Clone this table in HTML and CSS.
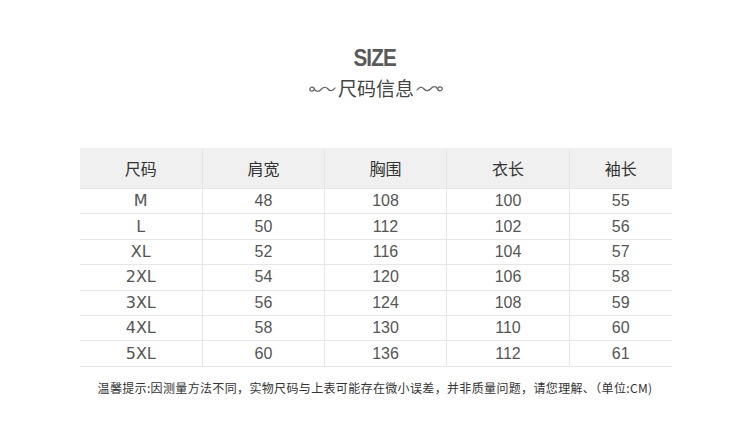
FILE: index.html
```html
<!DOCTYPE html>
<html lang="zh">
<head>
<meta charset="utf-8">
<link rel="stylesheet" href="styles.css">
</head>
<body>
<div class="page">
  <div class="title">SIZE</div>
  <div class="subtitle">
    <svg class="orn" width="28" height="12" viewBox="0 0 28 12"><path d="M6 7 C4 9 1 8 2 5.5 C3 3.5 6 4 6.5 6 C7.5 9 11 9 13 6.5 C15 4 18 3.5 20 6 C22 8.5 25 8 27 5" fill="none" stroke="#666" stroke-width="1.3" stroke-linecap="round"/></svg>
    <span>尺码信息</span>
    <svg class="orn" width="28" height="12" viewBox="0 0 28 12"><path d="M1 7 C3 4 6 3.5 8 6 C10 8.5 13 8 15 5.5 C17 3 20.5 3 21.5 6 C22 8 25 8.5 26 6.5 C27 4 24 3 22 5" fill="none" stroke="#666" stroke-width="1.3" stroke-linecap="round"/></svg>
  </div>
  <table class="sizes">
    <colgroup>
      <col class="c1"><col class="c2"><col class="c3"><col class="c4"><col class="c5">
    </colgroup>
    <thead>
      <tr><th>尺码</th><th>肩宽</th><th>胸围</th><th>衣长</th><th>袖长</th></tr>
    </thead>
    <tbody>
      <tr><td class="sz">M</td><td>48</td><td>108</td><td>100</td><td>55</td></tr>
      <tr><td class="sz">L</td><td>50</td><td>112</td><td>102</td><td>56</td></tr>
      <tr><td class="sz">XL</td><td>52</td><td>116</td><td>104</td><td>57</td></tr>
      <tr><td class="sz">2XL</td><td>54</td><td>120</td><td>106</td><td>58</td></tr>
      <tr><td class="sz">3XL</td><td>56</td><td>124</td><td>108</td><td>59</td></tr>
      <tr><td class="sz">4XL</td><td>58</td><td>130</td><td>110</td><td>60</td></tr>
      <tr><td class="sz">5XL</td><td>60</td><td>136</td><td>112</td><td>61</td></tr>
    </tbody>
  </table>
  <p class="note">温馨提示:因测量方法不同，实物尺码与上表可能存在微小误差，并非质量问题，请您理解、（单位:CM)</p>
</div>
</body>
</html>
```

FILE: styles.css
```css
html, body {
  margin: 0;
  padding: 0;
  background: #fff;
}
.page {
  width: 750px;
  height: 423px;
  display: flex;
  flex-direction: column;
  align-items: center;
  font-family: "Liberation Sans", "Noto Sans CJK SC", sans-serif;
  color: #555;
}
.title {
  margin-top: 44px;
  font-size: 24px;
  font-weight: bold;
  color: #595959;
  letter-spacing: -1px;
  line-height: 28px;
  transform: scaleX(0.86);
}
.subtitle {
  margin-top: 3px;
  display: flex;
  align-items: center;
  gap: 2px;
  font-family: "Noto Sans CJK SC", sans-serif;
  font-size: 19px;
  line-height: 26px;
  color: #444;
  margin-left: 2px;
}
.orn {
  display: block;
  margin-top: 2px;
}
.sizes {
  margin-top: 47px;
  margin-left: 1px;
  border-collapse: collapse;
  width: 592px;
  table-layout: fixed;
}
.c1 { width: 123px; }
.c2 { width: 122px; }
.c3 { width: 122px; }
.c4 { width: 123px; }
.c5 { width: 102px; }
.sizes th {
  background: #f0f0f0;
  height: 40px;
  padding: 0;
  font-family: "Noto Sans CJK SC", sans-serif;
  font-weight: normal;
  font-size: 16px;
  color: #333;
  border-left: 1px solid #e6e6e6;
  text-align: center;
}
.sizes td {
  height: 24.4px;
  padding: 0;
  font-size: 16px;
  color: #555;
  text-align: center;
  border-left: 1px solid #e6e6e6;
  border-top: 1px solid #e6e6e6;
  line-height: 24px;
}
.sizes th:first-child,
.sizes td:first-child {
  border-left: none;
}
.sizes tbody tr:last-child td {
  border-bottom: 1px solid #e6e6e6;
}
.sz {
  font-family: "DejaVu Sans", sans-serif;
  font-size: 15px;
  color: #444;
}
.note {
  margin: 13px 0 0 0;
  font-family: "Noto Sans CJK SC", sans-serif;
  font-size: 12px;
  line-height: 16px;
  color: #333;
  letter-spacing: 0.35px;
}
```
